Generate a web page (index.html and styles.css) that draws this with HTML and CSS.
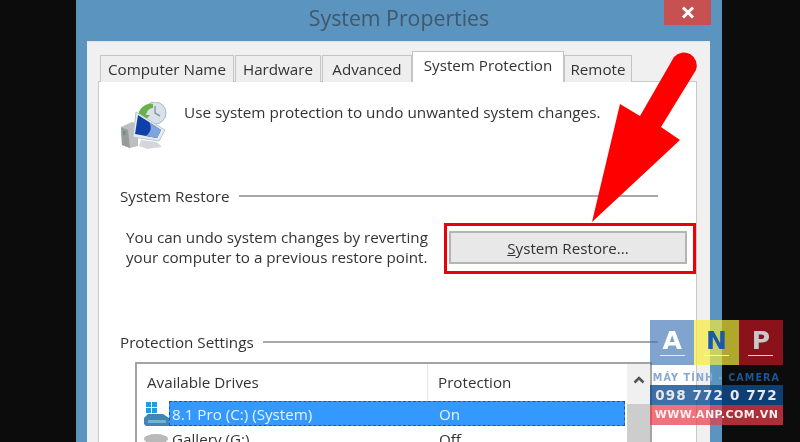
FILE: index.html
```html
<!DOCTYPE html>
<html lang="en">
<head>
  <meta charset="UTF-8" />
  <title>System Properties</title>
  <link rel="stylesheet" href="styles.css">
</head>
<body>

  <div class="window">
    <div class="titlebar">
      <span class="title">System Properties</span>
      <div class="close-btn">
        <svg width="14" height="13" viewBox="0 0 14 13"><path d="M2 1.5 L12 11.5 M12 1.5 L2 11.5" stroke="#fff" stroke-width="3"/></svg>
      </div>
    </div>

    <div class="face">
      <div class="tabs">
        <div class="tab tab-name">Computer Name</div>
        <div class="tab tab-hardware">Hardware</div>
        <div class="tab tab-advanced">Advanced</div>
        <div class="tab tab-active">System Protection</div>
        <div class="tab tab-remote">Remote</div>
      </div>

      <div class="panel">
        <div class="intro">
          <svg class="intro-icon" width="47" height="47" viewBox="0 0 47 47">
            <!-- tower -->
            <path d="M0 25 L11 20 L17 22 L17 44 L9 46 L1 43 Z" fill="#bcbfbf"/>
            <path d="M0 25 L7 28 L9 46 L1 43 Z" fill="#989b9b"/>
            <rect x="2" y="29" width="2.5" height="4" fill="#5f9a6a"/>
            <!-- clock and arrow -->
            <circle cx="34" cy="11" r="11" fill="#d9e2ea" stroke="#aab6c2"/>
            <path d="M34 4 V11 L39 14" stroke="#8a9bab" stroke-width="1.5" fill="none"/>
            <path d="M17 13 C19 5 25 1 32 2 L32 6 C28 6 26 9 25 13 L29 13 L22 21 L14 13 Z" fill="#6cb04a"/>
            <!-- monitor -->
            <path d="M15 10 L44 28 L38 39 L12 35 Z" fill="#e6ebef" stroke="#bcc4cc"/>
            <path d="M17 13 L28 20 L40 28 L36 36 L14 32 Z" fill="#0f3fa8"/>
            <path d="M28 20 L40 28 L36 36 L25 34 C30 30 31 25 28 20 Z" fill="#7da4dc"/>
            <path d="M20 38 L36 40 L41 45 L26 47 L18 44 Z" fill="#d3d7db"/>
          </svg>
          <p class="intro-text">Use system protection to undo unwanted system changes.</p>
        </div>

        <div class="legend legend-restore">
          <span>System Restore</span>
          <div class="legend-line"></div>
        </div>

        <div class="restore-row">
          <p class="restore-text">You can undo system changes by reverting<br>your computer to a previous restore point.</p>
          <div class="restore-btn"><span><u>S</u>ystem Restore...</span></div>
        </div>

        <div class="legend legend-settings">
          <span>Protection Settings</span>
          <div class="legend-line"></div>
        </div>

        <div class="drives">
          <div class="drives-list">
            <div class="drives-head">
              <div class="col-drive">Available Drives</div>
              <div class="col-state">Protection</div>
            </div>
            <div class="drive-row">
              <svg class="drive-icon" width="25" height="25" viewBox="0 0 25 25">
                <path d="M2 1 H7 V6 H2 Z M8 1 H13 V6 H8 Z M2 7 H7 V12 H2 Z M8 7 H13 V12 H8 Z" fill="#18a0e0"/>
                <path d="M0 17 L4 13 H19 L25 17 V25 H2 L0 23 Z" fill="#3f86b4"/>
                <rect x="4" y="19" width="18" height="3" fill="#76b2d0"/>
              </svg>
              <div class="drive-sel">
                <div class="col-name">8.1 Pro (C:) (System)</div>
                <div class="col-state">On</div>
              </div>
            </div>
            <div class="drive-row">
              <svg class="drive-icon" width="25" height="25" viewBox="0 0 25 25">
                <ellipse cx="12" cy="13" rx="12" ry="5" fill="#b9b9b9"/>
              </svg>
              <div class="drive-plain">
                <div class="col-name">Gallery (G:)</div>
                <div class="col-state">Off</div>
              </div>
            </div>
          </div>
          <div class="scrollbar">
            <svg width="12" height="9" viewBox="0 0 12 9"><path d="M1.5 7.5 L6 3 L10.5 7.5" stroke="#555" stroke-width="2.6" fill="none"/></svg>
            <div class="scroll-thumb"></div>
          </div>
        </div>
      </div>
    </div>
  </div>

  <!-- red marks drawn over the screenshot -->
  <div class="mark-box"></div>
  <svg class="mark-arrow" width="800" height="442" viewBox="0 0 800 442">
    <path d="M592 222 L620 104 L640 116 L674 57 A13 13 0 0 1 696 70 L661 127 L680 140 Z" fill="#ff0000"/>
  </svg>

  <!-- watermark -->
  <div class="stamp">
    <div class="stamp-letters">
      <div class="stamp-a"><span>A</span></div>
      <div class="stamp-n"><span>N</span></div>
      <div class="stamp-p"><span>P</span></div>
    </div>
    <div class="stamp-sub"><span class="sub-light">MÁY TÍNH -</span> <span class="sub-dark">CAMERA</span></div>
    <div class="stamp-phone">098 772 0 772</div>
    <div class="stamp-web">WWW.ANP.COM.VN</div>
  </div>

</body>
</html>
```

FILE: styles.css
```css
body, html {
  height: 100%;
  margin: 0;
  overflow: hidden;
  background-color: #0c0c0c;
  font-family: "Open Sans", Arial, sans-serif;
}

.window {
  width: 646px;
  height: 442px;
  margin-left: 76px;
  background-color: #5b94bf;
  display: flex;
  flex-direction: column;
  filter: blur(0.5px);
}

.titlebar {
  height: 41px;
  flex-shrink: 0;
  display: flex;
  justify-content: center;
  padding-top: 4px;
  box-sizing: border-box;
  position: relative;
}

.title {
  font-size: 21.3px;
  line-height: 28px;
  color: #40586c;
}

.close-btn {
  position: absolute;
  top: 0;
  left: 588px;
  width: 47px;
  height: 25px;
  background-color: #c75050;
  display: flex;
  align-items: center;
  justify-content: center;
}

.face {
  flex: 1;
  margin: 0 12px 0 11px;
  background-color: #f0f0f0;
  border-top: 1px solid #dfe6ea;
  padding: 0 13px 0 11px;
  min-height: 0;
  display: flex;
  flex-direction: column;
}

.tabs {
  display: flex;
  align-items: flex-end;
  height: 40px;
  padding-left: 2px;
  flex-shrink: 0;
  margin-bottom: -1px;
  position: relative;
  z-index: 1;
}

.tab {
  height: 27px;
  box-sizing: border-box;
  border: 1.5px solid #c4c4c4;
  border-bottom: none;
  background-color: #eeeeee;
  font-size: 15.2px;
  line-height: 27px;
  color: #333;
  text-align: center;
  white-space: nowrap;
}

.tab-name { width: 134px; margin-right: 1px; }
.tab-hardware { width: 86px; margin-right: 1px; }
.tab-advanced { width: 90px; }

.tab-active {
  width: 152px;
  height: 31px;
  background-color: #fff;
}

.tab-remote { width: 68px; }

.panel {
  flex: 1;
  min-height: 0;
  background-color: #fff;
  border: 1.5px solid #c8c8c8;
  border-bottom: none;
  overflow: hidden;
}

.intro {
  display: flex;
  gap: 16px;
  padding: 20px 0 0 22px;
}

.intro-text {
  margin: 0;
  font-size: 15.3px;
  line-height: 20px;
  color: #333;
}

.legend {
  display: flex;
  align-items: center;
  gap: 9px;
  height: 20px;
  padding-left: 21px;
  margin-right: 38px;
  font-size: 15.2px;
  color: #333;
}

.legend-restore { margin-top: 37px; }
.legend-settings { margin-top: 65px; }

.legend-line {
  flex: 1;
  height: 2px;
  margin-top: -1px;
  background-color: #a8a8a8;
}

.restore-row {
  display: flex;
  margin-top: 21px;
  padding-left: 27px;
}

.restore-text {
  margin: 0;
  width: 323px;
  font-size: 15.2px;
  line-height: 20px;
  color: #333;
}

.restore-btn {
  width: 238px;
  height: 33px;
  margin-top: 4px;
  box-sizing: border-box;
  border: 2px solid #b4b4b4;
  background-color: #e8e8e8;
  font-size: 15.2px;
  line-height: 31px;
  color: #333;
  text-align: center;
}

.drives {
  display: flex;
  margin: 10px 44px 0 36px;
  height: 120px;
  border: 2px solid #a4a4a4;
  border-bottom: none;
  box-sizing: border-box;
}

.drives-list {
  width: 488px;
  flex-shrink: 0;
}

.drives-head {
  display: flex;
  height: 37px;
  font-size: 15.2px;
  line-height: 36px;
  color: #333;
}

.col-drive {
  width: 291px;
  box-sizing: border-box;
  padding-left: 10px;
  border-right: 1px solid #e4e8ee;
}

.col-state {
  padding-left: 10px;
}

.drive-row {
  display: flex;
  align-items: flex-start;
  padding-left: 7px;
  height: 25px;
  font-size: 15.2px;
  color: #333;
}

.drive-row .drive-icon {
  flex-shrink: 0;
}

.drive-sel,
.drive-plain {
  flex: 1;
  display: flex;
  box-sizing: border-box;
  height: 25px;
  line-height: 24px;
}

.drive-sel {
  background-color: #3399ff;
  border: 1px dashed #24598e;
  color: #e6f2ff;
}

.drive-plain {
  border: 1px solid transparent;
}

.col-name {
  width: 259px;
  padding-left: 2px;
  box-sizing: border-box;
}

.scrollbar {
  width: 23px;
  margin-left: 2px;
  background-color: #f0f0f0;
  display: flex;
  flex-direction: column;
  align-items: center;
  padding-top: 11px;
  box-sizing: border-box;
}

.scroll-thumb {
  width: 100%;
  height: 60px;
  margin-top: 20px;
  background-color: #cdcdcd;
}

/* overlays */
.mark-box {
  position: absolute;
  left: 444px;
  top: 223px;
  width: 252px;
  height: 51px;
  box-sizing: border-box;
  border: 3px solid #e8000a;
}

.mark-arrow {
  position: absolute;
  left: 0;
  top: 0;
}

.stamp {
  position: absolute;
  left: 650px;
  top: 320px;
  width: 133px;
  font-family: "DejaVu Sans", sans-serif;
  font-weight: bold;
  text-align: center;
  filter: blur(0.4px);
}

.stamp-letters {
  display: flex;
  height: 45px;
}

.stamp-letters div {
  flex: 1;
  display: flex;
  justify-content: center;
  padding-top: 7px;
  box-sizing: border-box;
  font-size: 25px;
  line-height: 28px;
}

.stamp-letters span {
  display: block;
  width: 25px;
  height: 28px;
  border-bottom: 1px solid rgba(255, 255, 255, 0.8);
}

.stamp-a { background-color: rgba(60, 115, 180, 0.65); color: #fff; }
.stamp-n { background-color: rgba(245, 235, 60, 0.7); color: #1c5aa8; }
.stamp-p { background-color: rgba(170, 20, 30, 0.8); color: #c8c8c8; }

.stamp-sub {
  height: 20px;
  font-size: 9.6px;
  line-height: 26px;
  letter-spacing: 1.1px;
  white-space: nowrap;
}

.sub-light { color: #86a9d2; }
.sub-dark { color: #1e5594; }

.stamp-phone {
  height: 20px;
  background-color: rgba(15, 75, 145, 0.8);
  font-size: 13.5px;
  line-height: 20px;
  letter-spacing: 1.1px;
  color: #e8e8e8;
  white-space: nowrap;
}

.stamp-web {
  height: 20px;
  background-color: rgba(235, 60, 70, 0.72);
  font-size: 11px;
  line-height: 20px;
  letter-spacing: 0.4px;
  color: #f2f2f2;
  white-space: nowrap;
}
```
